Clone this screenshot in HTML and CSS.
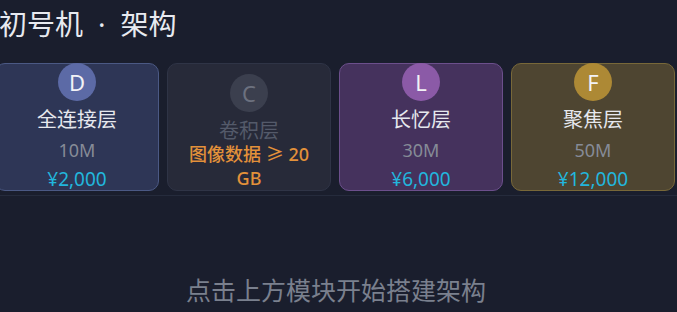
FILE: index.html
```html
<!DOCTYPE html>
<html lang="zh-CN">
<head>
  <meta charset="UTF-8">
  <title>初号机 · 架构</title>
  <meta name="viewport" content="width=device-width, initial-scale=1.0">
  <link rel="stylesheet" href="styles.css">
</head>
<body>

  <div class="app">
    <h1 class="title">初号机<span class="dot">·</span>架构</h1>

    <div class="palette">
      <div class="module dense">
        <div class="badge">D</div>
        <div class="name">全连接层</div>
        <div class="size">10M</div>
        <div class="price">¥2,000</div>
      </div>

      <div class="module conv locked">
        <div class="badge">C</div>
        <div class="name">卷积层</div>
        <div class="need">图像数据 ≥ 20 GB</div>
      </div>

      <div class="module memory">
        <div class="badge">L</div>
        <div class="name">长忆层</div>
        <div class="size">30M</div>
        <div class="price">¥6,000</div>
      </div>

      <div class="module focus">
        <div class="badge">F</div>
        <div class="name">聚焦层</div>
        <div class="size">50M</div>
        <div class="price">¥12,000</div>
      </div>
    </div>

    <div class="canvas">
      <p class="hint">点击上方模块开始搭建架构</p>
    </div>
  </div>

</body>
</html>
```

FILE: styles.css
```css
* {
  box-sizing: border-box;
}

body {
  font-family: 'Noto Sans', 'Noto Sans CJK SC', sans-serif;
  margin: 0;
  padding: 0;
  background: #1a1e2d;
  color: #e8eaf0;
  overflow: hidden;
}

.app {
  margin-left: -5px;
}

.title {
  margin: 0;
  padding-left: 4px;
  font-size: 28px;
  font-weight: 400;
  line-height: 49px;
  color: #e8eaf0;
}

.title .dot {
  margin: 0 15px;
}

.palette {
  display: flex;
  gap: 8px;
  padding: 14px 0 4px;
  border-bottom: 1px solid #252b3c;
}

.module {
  flex: none;
  width: 164px;
  height: 128px;
  display: flex;
  flex-direction: column;
  justify-content: flex-end;
  align-items: center;
  padding: 0 12px;
  border: 1px solid;
  border-radius: 10px;
  text-align: center;
}

.badge {
  flex: none;
  width: 38px;
  height: 38px;
  margin-bottom: 8px;
  border-radius: 50%;
  display: flex;
  align-items: center;
  justify-content: center;
  font-size: 22px;
  color: #f2f2f6;
}

.name {
  font-size: 20px;
  line-height: 22px;
  color: #e6e8ee;
}

.size {
  margin-top: 8px;
  font-size: 18px;
  line-height: 22px;
  color: #868b97;
}

.price {
  margin-top: 7px;
  font-size: 19px;
  line-height: 22px;
  color: #22b6dd;
}

.need {
  font-size: 18px;
  line-height: 24px;
  font-weight: 500;
  color: #e3913a;
}

/* module colours */

.dense {
  background: #2e3656;
  border-color: #4b5984;
}

.dense .badge {
  background: #5c6aa6;
}

.conv {
  background: #272a39;
  border-color: #2f3446;
}

.conv .badge {
  background: #3b3f4e;
  color: #6c717f;
}

.locked .name {
  color: #545a6a;
}

.memory {
  background: #45325d;
  border-color: #6c4f8c;
}

.memory .badge {
  background: #8b5aa7;
}

.focus {
  background: #4e4531;
  border-color: #786839;
}

.focus .badge {
  background: #ad8935;
}

.canvas {
  padding-top: 77px;
  text-align: center;
}

.hint {
  margin: 0;
  font-size: 25px;
  line-height: 34px;
  color: #7a808e;
}
```
